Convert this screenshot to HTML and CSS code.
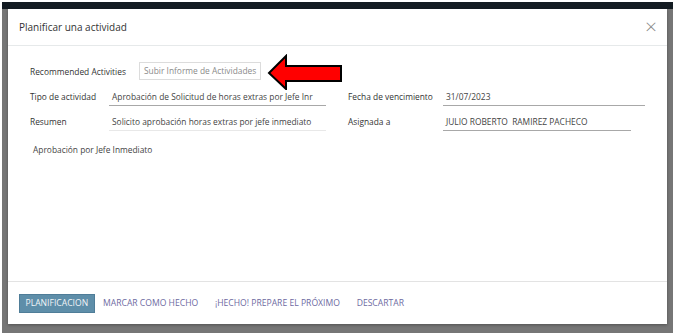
FILE: index.html
```html
<!DOCTYPE html>
<html>
<head>
  <meta charset="UTF-8">
  <title>Planificar una actividad</title>
  <link rel="stylesheet" href="styles.css">
</head>
<body>
  <div class="backdrop">
    <div class="modal">
      <div class="modal-header">
        <h4 class="modal-title">Planificar una actividad</h4>
        <span class="close">&times;</span>
      </div>

      <div class="modal-body">
        <div class="recommended">
          <span class="label rec-label">Recommended Activities</span>
          <span class="rec-select">Subir Informe de Actividades</span>
          <svg class="arrow" width="76" height="36" viewBox="0 0 76 36">
            <polygon points="2,19 19,2 19,12 74,12 74,27 19,27 19,35" fill="#ff0000" stroke="#000" stroke-width="2" stroke-linejoin="miter"/>
          </svg>
        </div>

        <div class="groups">
          <div class="group left">
            <span class="label">Tipo de actividad</span>
            <span class="field focused">Aprobación de Solicitud de horas extras por Jefe Inr</span>
            <span class="label">Resumen</span>
            <span class="field light">Solicito aprobación horas extras por jefe inmediato</span>
          </div>
          <div class="group right">
            <span class="label">Fecha de vencimiento</span>
            <span class="field">31/07/2023</span>
            <span class="label">Asignada a</span>
            <span class="field short">JULIO ROBERTO &nbsp;RAMIREZ PACHECO</span>
          </div>
        </div>

        <p class="note">Aprobación por Jefe Inmediato</p>
      </div>

      <div class="modal-footer">
        <button class="btn primary">PLANIFICACION</button>
        <button class="btn link">MARCAR COMO HECHO</button>
        <button class="btn link">¡HECHO! PREPARE EL PRÓXIMO</button>
        <button class="btn link">DESCARTAR</button>
      </div>
    </div>
  </div>
</body>
</html>
```

FILE: styles.css
```css
html, body {
  margin: 0;
  background: #fff;
}
body {
  padding: 2px 4px 3px 2px;
  font-family: "Open Sans", "Liberation Sans", sans-serif;
  color: #444;
}
.backdrop {
  height: 331px;
  padding: 7px 6px 0 6px;
  box-sizing: border-box;
  background: linear-gradient(#131b22 0, #131b22 7px, #767676 7px);
}
.modal {
  height: 315px;
  background: #fff;
  display: flex;
  flex-direction: column;
  box-shadow: 0 1px 3px rgba(0,0,0,0.3);
}
.modal-header {
  height: 37px;
  flex: none;
  display: flex;
  align-items: center;
  justify-content: space-between;
  padding: 0 10px 0 11px;
  border-bottom: 1px solid #e6e9ea;
  box-sizing: border-box;
}
.modal-title {
  margin: 0;
  font-size: 10px;
  font-weight: normal;
  color: #333;
}
.close {
  font-size: 21px;
  font-weight: 300;
  color: #8a8a8a;
  line-height: 1;
  margin-top: -2px;
}
.modal-body {
  flex: 1;
  padding: 8px 22px 0 22px;
  font-size: 8.4px;
}
.label {
  color: #333;
}
.recommended {
  display: flex;
  align-items: center;
  height: 34px;
}
.rec-label {
  width: 109px;
}
.rec-select {
  width: 122px;
  height: 18px;
  box-sizing: border-box;
  border: 1px solid #dcdcdc;
  color: #8a8a8a;
  padding: 0 4px;
  line-height: 16px;
  white-space: nowrap;
  overflow: hidden;
}
.arrow {
  margin-left: 6px;
  margin-top: 2px;
}
.groups {
  display: flex;
  gap: 22px;
  margin-top: 2px;
}
.group {
  display: grid;
  row-gap: 9px;
  align-items: end;
}
.group.left {
  grid-template-columns: 79px 217px;
}
.group.right {
  grid-template-columns: 95px 202px;
}
.field {
  padding: 0 3px 2px 3px;
  border-bottom: 1px solid #a8a8a8;
  white-space: nowrap;
  overflow: hidden;
  color: #444;
  line-height: 13px;
}
.field.light {
  border-bottom-color: #e8e8e8;
}
.field.short {
  width: 182px;
}
.group .label {
  line-height: 13px;
  padding-bottom: 3px;
}
.note {
  margin: 13px 0 0 3px;
  color: #444;
}
.modal-footer {
  height: 43px;
  flex: none;
  display: flex;
  align-items: center;
  padding: 0 11px;
  border-top: 1px solid #e3e3e3;
  box-sizing: border-box;
}
.btn {
  font-family: inherit;
  font-size: 8.6px;
  border: none;
  background: none;
  padding: 0 8.4px;
  height: 19px;
  cursor: pointer;
}
.btn.primary {
  background: #5e8ea9;
  color: #f2f5f8;
  border: 1px solid #4f7d98;
  padding: 0 5.5px;
}
.btn.link {
  color: #6d6a9f;
}
```
